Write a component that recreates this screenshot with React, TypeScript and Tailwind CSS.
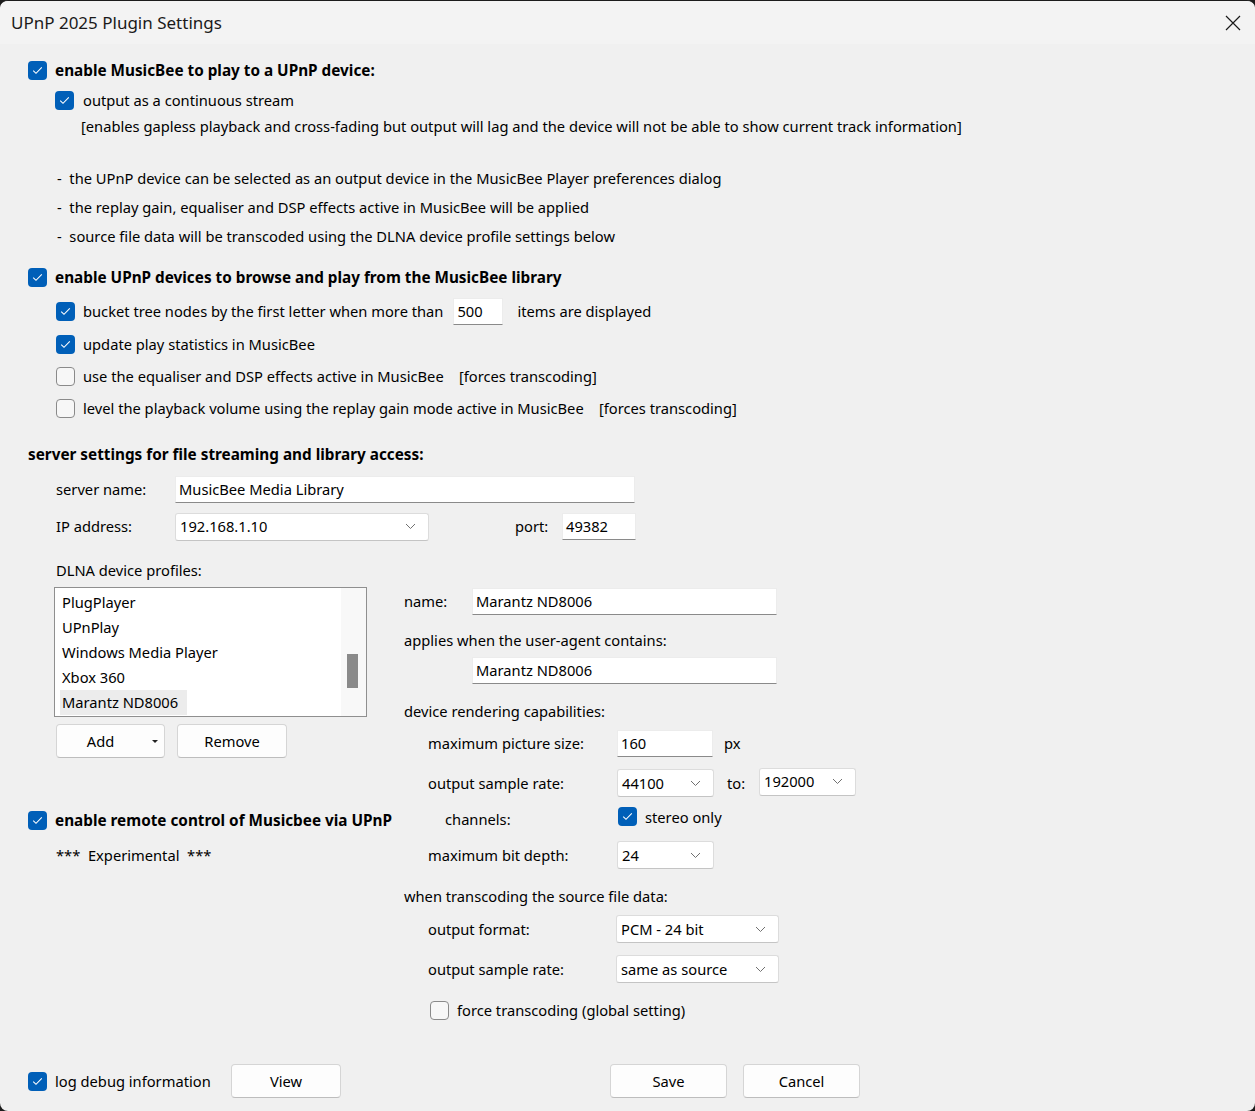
import React from "react";

const F = { fontFamily: '"Noto Sans", "Open Sans", sans-serif' };

function Check({ on }: { on: boolean }) {
  return on ? (
    <span className="inline-flex h-[19px] w-[19px] shrink-0 items-center justify-center rounded-[4px] bg-[#005fb8]">
      <svg width="11" height="9" viewBox="0 0 11 9" fill="none">
        <path d="M1.2 4.6 L4 7.3 L9.8 1.4" stroke="white" strokeWidth="1.1" />
      </svg>
    </span>
  ) : (
    <span className="inline-block h-[19px] w-[19px] shrink-0 rounded-[4px] border border-[#8a8a8a] bg-[#f7f7f7]" />
  );
}

function Chevron() {
  return (
    <svg width="11" height="7" viewBox="0 0 11 7" fill="none">
      <path d="M1 1 L5.5 5.5 L10 1" stroke="#707070" strokeWidth="1" />
    </svg>
  );
}

function Input({ w, value, cls = "" }: { w: string; value: string; cls?: string }) {
  return (
    <div className={`flex h-[27px] items-center border border-[#ececec] border-b-[#8a8a8a] bg-white pl-[3px] ${w} ${cls}`}>
      {value}
    </div>
  );
}

function Select({ w, value, cls = "" }: { w: string; value: string; cls?: string }) {
  return (
    <div className={`flex h-[28px] items-center justify-between rounded-[3px] border border-[#dcdcdc] border-b-[#c4c4c4] bg-white pl-[4px] pr-[12px] ${w} ${cls}`}>
      <span>{value}</span>
      <Chevron />
    </div>
  );
}

function Btn({ w, children, cls = "" }: { w: string; children: React.ReactNode; cls?: string }) {
  return (
    <div className={`flex h-[34px] items-center justify-center rounded-[4px] border border-[#d5d5d5] border-b-[#bdbdbd] bg-[#fdfdfd] ${w} ${cls}`}>
      {children}
    </div>
  );
}

export default function App() {
  return (
    <div className="h-[1111px] w-[1255px] bg-[#1c1c1c] text-[14.7px] text-black" style={F}>
      <div className="flex h-[1111px] w-[1255px] flex-col overflow-hidden rounded-[8px] border-t border-[#1c1c1c] bg-[#f0f0f0]">
        {/* title bar */}
        <div className="flex h-[43px] shrink-0 items-center justify-between bg-[#f3f3f3] pl-[11px] pr-[14px]">
          <span className="text-[17px] text-[#1a1a1a]">UPnP 2025 Plugin Settings</span>
          <svg width="16" height="16" viewBox="0 0 16 16" fill="none">
            <path d="M1 1 L15 15 M15 1 L1 15" stroke="#1a1a1a" strokeWidth="1.2" />
          </svg>
        </div>

        <div className="flex flex-1 flex-col pl-[28px]">
          {/* section 1 */}
          <div className="mt-[14px] flex h-[24px] items-center gap-[8px] text-[15.3px] font-bold">
            <Check on /> <span>enable MusicBee to play to a UPnP device:</span>
          </div>
          <div className="ml-[27px] mt-[6px] flex h-[24px] items-center gap-[9px]">
            <Check on /> <span>output as a continuous stream</span>
          </div>
          <div className="ml-[53px] mt-[2px] flex h-[24px] items-center">
            [enables gapless playback and cross-fading but output will lag and the device will not be able to show current track information]
          </div>
          <div className="ml-[29px] mt-[28px] flex h-[24px] items-center">-&nbsp; the UPnP device can be selected as an output device in the MusicBee Player preferences dialog</div>
          <div className="ml-[29px] mt-[5px] flex h-[24px] items-center">-&nbsp; the replay gain, equaliser and DSP effects active in MusicBee will be applied</div>
          <div className="ml-[29px] mt-[5px] flex h-[24px] items-center">-&nbsp; source file data will be transcoded using the DLNA device profile settings below</div>

          {/* section 2 */}
          <div className="mt-[17px] flex h-[24px] items-center gap-[8px] text-[15.3px] font-bold">
            <Check on /> <span>enable UPnP devices to browse and play from the MusicBee library</span>
          </div>
          <div className="ml-[28px] mt-[10px] flex h-[24px] items-center gap-[8px]">
            <Check on /> <span>bucket tree nodes by the first letter when more than</span>
            <Input w="w-[50px]" value="500" cls="ml-[2px] h-[25px]" />
            <span className="ml-[6px]">items are displayed</span>
          </div>
          <div className="ml-[28px] mt-[9px] flex h-[24px] items-center gap-[8px]">
            <Check on /> <span>update play statistics in MusicBee</span>
          </div>
          <div className="ml-[28px] mt-[8px] flex h-[24px] items-center gap-[8px]">
            <Check on={false} /> <span>use the equaliser and DSP effects active in MusicBee&nbsp;&nbsp;&nbsp; [forces transcoding]</span>
          </div>
          <div className="ml-[28px] mt-[8px] flex h-[24px] items-center gap-[8px]">
            <Check on={false} /> <span>level the playback volume using the replay gain mode active in MusicBee&nbsp;&nbsp;&nbsp; [forces transcoding]</span>
          </div>

          {/* server */}
          <div className="mt-[22px] flex h-[24px] items-center text-[15.3px] font-bold">server settings for file streaming and library access:</div>
          <div className="ml-[28px] mt-[10px] flex h-[27px] items-center">
            <span className="w-[119px]">server name:</span>
            <Input w="w-[460px]" value="MusicBee Media Library" />
          </div>
          <div className="ml-[28px] mt-[10px] flex h-[27px] items-center">
            <span className="w-[119px]">IP address:</span>
            <Select w="w-[254px]" value="192.168.1.10" />
            <span className="ml-[86px] w-[47px]">port:</span>
            <Input w="w-[74px]" value="49382" />
          </div>
          <div className="ml-[28px] mt-[18px] flex h-[24px] items-center">DLNA device profiles:</div>

          {/* two columns */}
          <div className="mt-[5px] flex">
            <div className="flex w-[376px] flex-col">
              <div className="ml-[26px] flex h-[130px] w-[313px] border border-[#8f8f8f] bg-white">
                <div className="flex flex-1 flex-col pl-[5px] pt-[2px]">
                  {["PlugPlayer", "UPnPlay", "Windows Media Player", "Xbox 360"].map((t) => (
                    <div key={t} className="flex h-[25px] items-center pl-[2px]">{t}</div>
                  ))}
                  <div className="flex h-[25px] w-[127px] items-center bg-[#ececec] pl-[2px]">Marantz ND8006</div>
                </div>
                <div className="flex w-[25px] flex-col bg-[#f8f8f8] pt-[66px]">
                  <div className="ml-[6px] h-[34px] w-[11px] bg-[#8a8a8a]" />
                </div>
              </div>
              <div className="ml-[28px] mt-[7px] flex gap-[12px]">
                <Btn w="w-[109px]" cls="relative">
                  <span className="mr-[20px]">Add</span>
                  <svg className="absolute right-[6px] top-[15px]" width="6" height="4" viewBox="0 0 6 4">
                    <path d="M0 0 L6 0 L3 3 Z" fill="#222" />
                  </svg>
                </Btn>
                <Btn w="w-[110px]">Remove</Btn>
              </div>
              <div className="mt-[50px] flex h-[24px] items-center gap-[8px] text-[15.3px] font-bold">
                <Check on /> <span>enable remote control of Musicbee via UPnP</span>
              </div>
              <div className="ml-[28px] mt-[11px] flex h-[24px] items-center">***&nbsp; Experimental&nbsp; ***</div>
            </div>

            <div className="flex flex-col">
              <div className="mt-[1px] flex h-[27px] items-center">
                <span className="w-[68px]">name:</span>
                <Input w="w-[305px]" value="Marantz ND8006" />
              </div>
              <div className="mt-[13px] flex h-[24px] items-center">applies when the user-agent contains:</div>
              <Input w="w-[305px]" value="Marantz ND8006" cls="ml-[68px] mt-[5px]" />
              <div className="mt-[15px] flex h-[24px] items-center">device rendering capabilities:</div>
              <div className="ml-[24px] mt-[7px] flex h-[27px] items-center">
                <span className="w-[189px]">maximum picture size:</span>
                <Input w="w-[96px]" value="160" />
                <span className="ml-[11px]">px</span>
              </div>
              <div className="ml-[24px] mt-[12px] flex h-[28px] items-center">
                <span className="w-[189px]">output sample rate:</span>
                <Select w="w-[97px]" value="44100" />
                <span className="ml-[13px] w-[32px]">to:</span>
                <Select w="w-[97px]" value="192000" cls="-mt-[3px]" />
              </div>
              <div className="mt-[10px] flex h-[24px] items-center">
                <span className="ml-[41px] w-[173px]">channels:</span>
                <span className="-mt-[4px] flex items-center gap-[8px]">
                  <Check on /> <span>stereo only</span>
                </span>
              </div>
              <div className="ml-[24px] mt-[10px] flex h-[28px] items-center">
                <span className="w-[189px]">maximum bit depth:</span>
                <Select w="w-[97px]" value="24" />
              </div>
              <div className="mt-[15px] flex h-[24px] items-center">when transcoding the source file data:</div>
              <div className="ml-[24px] mt-[7px] flex h-[28px] items-center">
                <span className="w-[188px]">output format:</span>
                <Select w="w-[163px]" value="PCM - 24 bit" />
              </div>
              <div className="ml-[24px] mt-[12px] flex h-[28px] items-center">
                <span className="w-[188px]">output sample rate:</span>
                <Select w="w-[163px]" value="same as source" />
              </div>
              <div className="ml-[26px] mt-[15px] flex h-[24px] items-center gap-[8px]">
                <Check on={false} /> <span>force transcoding (global setting)</span>
              </div>
            </div>
          </div>

          {/* footer */}
          <div className="mb-[13px] mt-auto flex h-[34px] items-center">
            <Check on />
            <span className="ml-[8px] w-[176px]">log debug information</span>
            <Btn w="w-[110px]" cls="border-[#0f5ba7] border-b-[#0f5ba7]">View</Btn>
            <Btn w="w-[117px]" cls="ml-[269px]">Save</Btn>
            <Btn w="w-[117px]" cls="ml-[16px]">Cancel</Btn>
          </div>
        </div>
      </div>
    </div>
  );
}
